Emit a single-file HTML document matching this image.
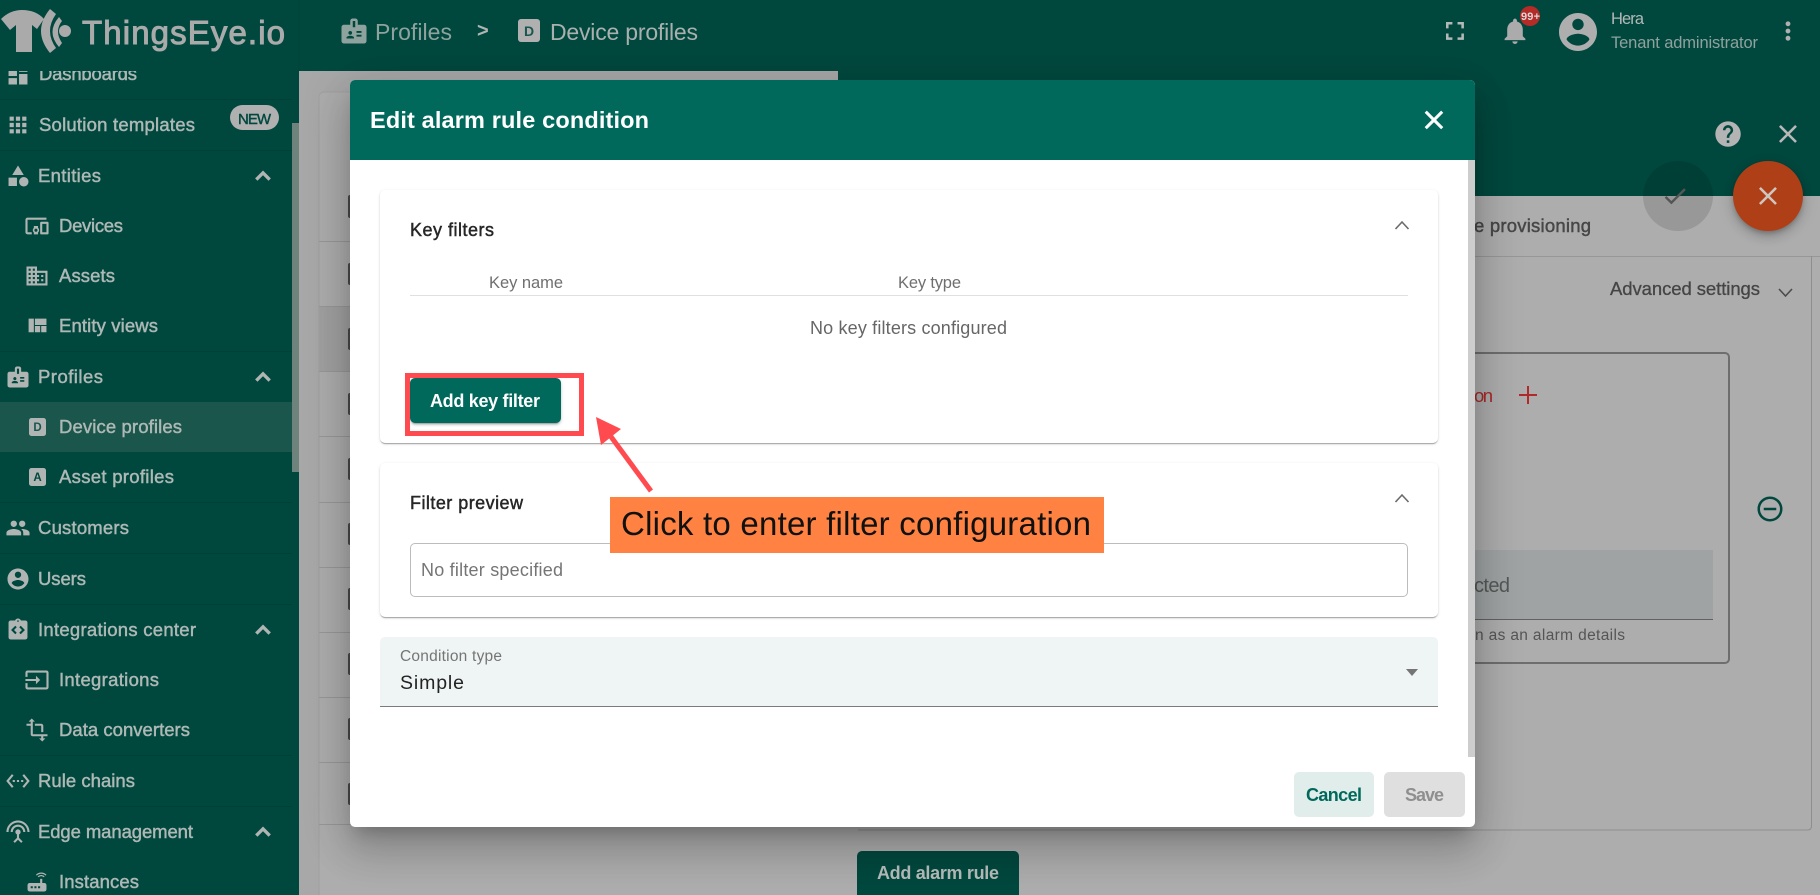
<!DOCTYPE html>
<html lang="en">
<head>
<meta charset="utf-8">
<title>Edit alarm rule condition</title>
<style>
html,body{margin:0;padding:0;width:1820px;height:895px;overflow:hidden;background:#a8a8a8;font-family:"Liberation Sans",sans-serif}
svg{position:absolute;left:0;top:0}
svg text{font-family:"Liberation Sans",sans-serif;white-space:pre}
.b{position:absolute;box-sizing:border-box}
#l1{z-index:1}
#l3{z-index:3}
.card{background:#fff;border-radius:5px;box-shadow:0 2px 1px -1px rgba(0,0,0,.2),0 1px 1px rgba(0,0,0,.14),0 1px 3px rgba(0,0,0,.12)}
</style>
</head>
<body>
<svg id="l1" width="1820" height="895" viewBox="0 0 1820 895">
<defs>
<path id="dash" d="M3 13h8V3H3v10zm0 8h8v-6H3v6zm10 0h8V11h-8v10zm0-18v6h8V3h-8z"/>
<path id="apps" d="M4 8h4V4H4v4zm6 12h4v-4h-4v4zm-6 0h4v-4H4v4zm0-6h4v-4H4v4zm6 0h4v-4h-4v4zm6-10v4h4V4h-4zm-6 4h4V4h-4v4zm6 6h4v-4h-4v4zm0 6h4v-4h-4v4z"/>
<path id="cat" d="M12 2l-5.500 9h11zM17.500 13a4.500 4.500 0 1 0 0 9a4.500 4.500 0 1 0 0-9zM3 13.500h8v8H3z"/>
<path id="dev" d="M3 6h18V4H3c-1.100 0-2 .9-2 2v12c0 1.100.9 2 2 2h4v-2H3V6zm10 6H9v1.780c-.61.55-1 1.330-1 2.220s.39 1.670 1 2.220V20h4v-1.780c.61-.55 1-1.340 1-2.220s-.39-1.670-1-2.220V12zm-2 5.500c-.83 0-1.500-.67-1.500-1.500s.67-1.500 1.500-1.500 1.500.67 1.500 1.500-.67 1.500-1.500 1.500zM22 8h-6c-.5 0-1 .5-1 1v10c0 .5.5 1 1 1h6c.5 0 1-.5 1-1V9c0-.5-.5-1-1-1zm-1 10h-4v-8h4v8z"/>
<path id="dom" d="M12 7V3H2v18h20V7H12zM6 19H4v-2h2v2zm0-4H4v-2h2v2zm0-4H4V9h2v2zm0-4H4V5h2v2zm4 12H8v-2h2v2zm0-4H8v-2h2v2zm0-4H8V9h2v2zm0-4H8V5h2v2zm10 12h-8v-2h2v-2h-2v-2h2v-2h-2V9h8v10zm-2-8h-2v2h2v-2zm0 4h-2v2h2v-2z"/>
<path id="quilt" d="M10 18h5v-6h-5v6zm-6 0h5V5H4v13zm12 0h5v-6h-5v6zM10 5v6h11V5H10z"/>
<path id="badge" d="M20 7h-5V4c0-1.100-.9-2-2-2h-2c-1.100 0-2 .9-2 2v3H4c-1.100 0-2 .9-2 2v11c0 1.100.9 2 2 2h16c1.100 0 2-.9 2-2V9c0-1.100-.9-2-2-2zM9 12c.83 0 1.500.67 1.500 1.500S9.830 15 9 15s-1.500-.67-1.500-1.500S8.170 12 9 12zm3 6H6v-.75c0-1 2-1.500 3-1.500s3 .5 3 1.500V18zm1-9h-2V4h2v5zm5 7.500h-4V15h4v1.500zm0-3h-4V12h4v1.500z"/>
<path id="people" d="M16 11c1.660 0 2.990-1.340 2.990-3S17.660 5 16 5c-1.660 0-3 1.340-3 3s1.340 3 3 3zm-8 0c1.660 0 2.990-1.340 2.990-3S9.660 5 8 5C6.340 5 5 6.340 5 8s1.340 3 3 3zm0 2c-2.330 0-7 1.170-7 3.500V19h14v-2.500c0-2.330-4.670-3.500-7-3.500zm8 0c-.29 0-.62.02-.97.05 1.160.84 1.970 1.970 1.970 3.450V19h6v-2.500c0-2.330-4.670-3.500-7-3.500z"/>
<path id="acc" d="M12 2C6.480 2 2 6.480 2 12s4.480 10 10 10 10-4.480 10-10S17.520 2 12 2zm0 3c1.660 0 3 1.340 3 3s-1.340 3-3 3-3-1.340-3-3 1.340-3 3-3zm0 14.200c-2.500 0-4.710-1.280-6-3.220.03-1.990 4-3.080 6-3.080 1.990 0 5.970 1.090 6 3.080-1.290 1.940-3.500 3.220-6 3.220z"/>
<path id="integ" d="M19 3h-4.180C14.400 1.840 13.300 1 12 1c-1.300 0-2.400.84-2.820 2H5c-1.100 0-2 .9-2 2v14c0 1.100.9 2 2 2h14c1.100 0 2-.9 2-2V5c0-1.100-.9-2-2-2zm-7-.25c.41 0 .75.34.75.75s-.34.75-.75.75-.75-.34-.75-.75.34-.75.75-.75zM10.800 14.600L9.400 16l-4-4 4-4 1.400 1.400L8.200 12l2.600 2.600zm2.400 0l2.600-2.600-2.600-2.600L14.600 8l4 4-4 4-1.400-1.400z"/>
<path id="input" d="M21 3.010H3c-1.100 0-2 .9-2 2V9h2V4.990h18v14.030H3V15H1v4.010c0 1.100.9 1.980 2 1.980h18c1.100 0 2-.88 2-1.980v-14c0-1.110-.9-2-2-2zM11 16l4-4-4-4v3H1v2h10v3z"/>
<path id="trans" d="M22 18v-2H8V4h2L7 1 4 4h2v2H2v2h4v8c0 1.100.9 2 2 2h8v2h-2l3 3 3-3h-2v-2h4zM10 8h6v6h2V8c0-1.100-.9-2-2-2h-6v2z"/>
<path id="eth" d="M7.770 6.760L6.230 5.480.82 12l5.410 6.520 1.540-1.280L3.420 12l4.350-5.240zM7 13h2v-2H7v2zm10-2h-2v2h2v-2zm-6 2h2v-2h-2v2zm6.770-7.520l-1.540 1.280L20.580 12l-4.350 5.240 1.540 1.280L23.180 12l-5.410-6.520z"/>
<path id="ant" d="M12 5c-3.870 0-7 3.130-7 7h2c0-2.760 2.240-5 5-5s5 2.240 5 5h2c0-3.870-3.130-7-7-7zm1 9.290c.88-.39 1.500-1.260 1.500-2.290 0-1.380-1.120-2.500-2.500-2.500S9.500 10.620 9.500 12c0 1.020.62 1.900 1.500 2.290v3.300L7.590 21 9 22.410l3-3 3 3L16.410 21 13 17.590v-3.300zM12 1C5.930 1 1 5.930 1 12h2c0-4.970 4.030-9 9-9s9 4.030 9 9h2c0-6.070-4.930-11-11-11z"/>
<path id="router" d="M20.200 5.900l.8-.8C19.600 3.700 17.800 3 16 3s-3.600.7-5 2.100l.8.8C13 4.800 14.500 4.200 16 4.200s3 .6 4.200 1.700zm-.9.8c-.9-.9-2.100-1.400-3.300-1.400s-2.400.5-3.300 1.400l.8.8c.7-.7 1.600-1 2.500-1 .9 0 1.800.3 2.500 1l.8-.8zM19 13h-2V9h-2v4H5c-1.100 0-2 .9-2 2v4c0 1.100.9 2 2 2h14c1.100 0 2-.9 2-2v-4c0-1.100-.9-2-2-2zM8 18H6v-2h2v2zm3.500 0h-2v-2h2v2zm3.500 0h-2v-2h2v2z"/>
<path id="full" d="M7 14H5v5h5v-2H7v-3zm-2-4h2V7h3V5H5v5zm12 7h-3v2h5v-5h-2v3zM14 5v2h3v3h2V5h-5z"/>
<path id="bell" d="M12 22c1.100 0 2-.9 2-2h-4c0 1.100.89 2 2 2zm6-6v-5c0-3.070-1.640-5.640-4.500-6.320V4c0-.83-.67-1.500-1.500-1.500s-1.500.67-1.500 1.500v.68C7.630 5.360 6 7.920 6 11v5l-2 2v1h16v-1l-2-2z"/>
<path id="more" d="M12 8c1.100 0 2-.9 2-2s-.9-2-2-2-2 .9-2 2 .9 2 2 2zm0 2c-1.100 0-2 .9-2 2s.9 2 2 2 2-.9 2-2-.9-2-2-2zm0 6c-1.100 0-2 .9-2 2s.9 2 2 2 2-.9 2-2-.9-2-2-2z"/>
<path id="help" d="M12 2C6.480 2 2 6.480 2 12s4.480 10 10 10 10-4.480 10-10S17.520 2 12 2zm1 17h-2v-2h2v2zm2.070-7.750l-.9.92C13.450 12.900 13 13.500 13 15h-2v-.5c0-1.100.45-2.100 1.170-2.830l1.240-1.260c.37-.36.59-.86.59-1.410 0-1.100-.9-2-2-2s-2 .9-2 2H8c0-2.210 1.790-4 4-4s4 1.790 4 4c0 .88-.36 1.680-.93 2.250z"/>
<path id="close" d="M19 6.410L17.590 5 12 10.590 6.410 5 5 6.410 10.590 12 5 17.590 6.410 19 12 13.410 17.590 19 19 17.590 13.410 12z"/>
<path id="up" d="M12 8l-6 6 1.410 1.410L12 10.830l4.590 4.580L18 14z"/>
<path id="check" d="M9 16.170L4.830 12l-1.420 1.410L9 19 21 7l-1.410-1.410z"/>
<path id="minus" d="M7 11v2h10v-2H7zm5-9C6.480 2 2 6.480 2 12s4.480 10 10 10 10-4.480 10-10S17.520 2 12 2zm0 18c-4.410 0-8-3.590-8-8s3.590-8 8-8 8 3.590 8 8-3.590 8-8 8z"/>
<clipPath id="navclip"><rect x="0" y="71" width="292" height="824"/></clipPath>
</defs>

<!-- page background -->
<rect x="0" y="0" width="1820" height="895" fill="#a8a8a8"/>
<!-- left list panel -->
<rect x="319" y="92" width="540" height="820" rx="5" fill="#adadad" stroke="#a0a0a0"/>
<rect x="319" y="306" width="519" height="65" fill="#a1a1a1"/>
<g stroke="#989898" stroke-width="1">
<path d="M319 241.500H838M319 306.500H838M319 371.500H838M319 436.500H838M319 502.500H838M319 567.500H838M319 632.500H838M319 697.500H838M319 762.500H838M319 824.500H838"/>
</g>
<g fill="#4a4a4a">
<rect x="348" y="195" width="6" height="23" rx="2"/><rect x="348" y="263" width="6" height="22" rx="2"/><rect x="348" y="328" width="6" height="22" rx="2"/><rect x="348" y="393" width="6" height="22" rx="2"/><rect x="348" y="458" width="6" height="22" rx="2"/><rect x="348" y="523" width="6" height="22" rx="2"/><rect x="348" y="588" width="6" height="22" rx="2"/><rect x="348" y="653" width="6" height="22" rx="2"/><rect x="348" y="718" width="6" height="22" rx="2"/><rect x="348" y="783" width="6" height="22" rx="2"/>
</g>

<!-- right drawer -->
<rect x="838" y="71" width="982" height="824" fill="#adadad"/>
<rect x="838" y="71" width="982" height="125" fill="#00483e"/>
<path d="M838 256.500H1820" stroke="#979797"/>
<path d="M1811.500 256V826q0 4-4 4H858" stroke="#8e8e8e" fill="none"/>
<rect x="1000" y="353" width="729" height="310" rx="4" fill="none" stroke="#6e6e6e" stroke-width="2"/>
<rect x="1100" y="550" width="613" height="69" fill="#9fa3a3"/>
<path d="M1100 619.500H1713" stroke="#5f6362"/>
<rect x="857" y="851" width="162" height="50" rx="5" fill="#00483e"/>
<text x="877" y="879" font-size="18" font-weight="700" fill="#b5bcb9" textLength="122">Add alarm rule</text>
<text x="1474" y="232" font-size="18.500" fill="#474747" stroke="#474747" stroke-width=".45" textLength="117">e provisioning</text>
<text x="1610" y="295" font-size="18.500" fill="#454545" stroke="#454545" stroke-width=".3" textLength="150">Advanced settings</text>
<path d="M1779 289l6.500 7 6.500-7" fill="none" stroke="#4b4b4b" stroke-width="1.600"/>
<text x="1474" y="402" font-size="18.500" fill="#a82828" textLength="19">on</text>
<path d="M1528 386v18M1519 395h18" stroke="#b02a2a" stroke-width="2"/>
<text x="1474" y="592" font-size="20" fill="#565858" textLength="36">cted</text>
<text x="1475" y="640" font-size="15.500" fill="#555" textLength="150">n as an alarm details</text>
<use href="#minus" transform="translate(1755 494) scale(1.250)" fill="#00483e"/>

<!-- sidebar -->
<rect x="0" y="71" width="299" height="824" fill="#00483e"/>
<rect x="292" y="123" width="7" height="349" fill="#6f837d"/>
<rect x="0" y="402" width="292" height="50" fill="#1a564c"/>
<path d="M0 99.500H292M0 150.500H292M0 351.500H292M0 502.500H292M0 553.500H292M0 604.500H292M0 755.500H292M0 806.500H292" stroke="#004037" stroke-width="1"/>

<g clip-path="url(#navclip)" fill="#b0b5b3">
<use href="#dash" transform="translate(5.400 62.400) scale(1.050)"/>
<use href="#apps" transform="translate(5.400 112.400) scale(1.050)"/>
<use href="#cat" transform="translate(5.400 163.400) scale(1.050)"/>
<use href="#dev" transform="translate(24.400 213.400) scale(1.050)"/>
<use href="#dom" transform="translate(24.400 263.400) scale(1.050)"/>
<use href="#quilt" transform="translate(24.400 313.400) scale(1.050)"/>
<use href="#badge" transform="translate(5.400 364.400) scale(1.050)"/>
<use href="#people" transform="translate(5.400 515.400) scale(1.050)"/>
<use href="#acc" transform="translate(5.400 566.400) scale(1.050)"/>
<use href="#integ" transform="translate(5.400 617.400) scale(1.050)"/>
<use href="#input" transform="translate(24.400 667.400) scale(1.050)"/>
<use href="#trans" transform="translate(24.400 717.400) scale(1.050)"/>
<use href="#eth" transform="translate(5.400 768.400) scale(1.050)"/>
<use href="#ant" transform="translate(5.400 819.400) scale(1.050)"/>
<use href="#router" transform="translate(24.400 869.400) scale(1.050)"/>
<rect x="29" y="418" width="17" height="18" rx="2.500"/>
<rect x="29" y="468" width="17" height="18" rx="2.500"/>
<g stroke="#b0b5b3" stroke-width=".8">
<use href="#up" transform="translate(248.600 161.600) scale(1.200)"/>
<use href="#up" transform="translate(248.600 362.600) scale(1.200)"/>
<use href="#up" transform="translate(248.600 615.600) scale(1.200)"/>
<use href="#up" transform="translate(248.600 817.600) scale(1.200)"/>
</g>
</g>
<g clip-path="url(#navclip)" font-size="18.500" fill="#aeb8b5" stroke="#aeb8b5" stroke-width=".45">
<text x="39" y="80" textLength="98">Dashboards</text>
<text x="39" y="131" textLength="156">Solution templates</text>
<text x="38" y="182" textLength="63">Entities</text>
<text x="59" y="232" textLength="64">Devices</text>
<text x="59" y="282" textLength="56">Assets</text>
<text x="59" y="332" textLength="99">Entity views</text>
<text x="38" y="383" textLength="65">Profiles</text>
<text x="59" y="433" textLength="123">Device profiles</text>
<text x="59" y="483" textLength="115">Asset profiles</text>
<text x="38" y="534" textLength="91">Customers</text>
<text x="38" y="585" textLength="48">Users</text>
<text x="38" y="636" textLength="158">Integrations center</text>
<text x="59" y="686" textLength="100">Integrations</text>
<text x="59" y="736" textLength="131">Data converters</text>
<text x="38" y="787" textLength="97">Rule chains</text>
<text x="38" y="838" textLength="155">Edge management</text>
<text x="59" y="888" textLength="80">Instances</text>
</g>
<g font-size="11.500" font-weight="700" fill="#1a564c" text-anchor="middle">
<text x="37.500" y="431">D</text>
</g>
<g font-size="11.500" font-weight="700" fill="#00483e" text-anchor="middle">
<text x="37.500" y="481">A</text>
</g>
<rect x="230" y="105" width="49" height="25" rx="12.500" fill="#b0b0b0"/>
<text x="238" y="124" font-size="15" fill="#00483e" stroke="#00483e" stroke-width=".4" textLength="33">NEW</text>

<!-- top toolbar -->
<rect x="0" y="0" width="1820" height="71" fill="#00483e"/>
<path d="M299 0V71" stroke="#004237"/>
<g fill="#aaaaaa">
<path d="M1 19Q10 10 22 10Q36 10 44 19L37 29L32 25V52H16V25L10 30Z"/>
<path d="M50 9L56 14Q44 31 56 48L50 53Q32 31 50 9Z"/>
<path d="M59 17L62 21Q54 31 62 43L59 47Q46 32 59 17Z"/>
<circle cx="65" cy="31" r="6"/>
<text x="82" y="44" font-size="33" textLength="203" stroke="#aaaaaa" stroke-width="1">ThingsEye.io</text>
</g>
<use href="#badge" transform="translate(339 16) scale(1.250)" fill="#8fa39e"/>
<text x="375" y="40" font-size="23" fill="#8fa39e" textLength="77">Profiles</text>
<text x="477" y="37" font-size="20" font-weight="700" fill="#b0b5b3" textLength="13">&gt;</text>
<rect x="518" y="19" width="22" height="23" rx="3" fill="#b0b0b0"/>
<text x="529" y="36" font-size="14" font-weight="700" fill="#1a564c" text-anchor="middle">D</text>
<text x="550" y="40" font-size="23" fill="#aab0ae" textLength="148">Device profiles</text>

<use href="#full" transform="translate(1439.600 15.600) scale(1.280)" fill="#b4b8b6"/>
<use href="#bell" transform="translate(1499.400 15.400) scale(1.300)" fill="#ababab"/>
<circle cx="1530" cy="16" r="10" fill="#b52b27"/>
<text x="1521" y="20" font-size="11" font-weight="700" fill="#d8d8d8" textLength="19">99+</text>
<use href="#acc" transform="translate(1555.200 9.200) scale(1.900)" fill="#aeaeae"/>
<text x="1611" y="24" font-size="16.500" fill="#b3b9b7" textLength="33">Hera</text>
<text x="1611" y="48" font-size="16.500" fill="#8fa19d" textLength="147">Tenant administrator</text>
<use href="#more" transform="translate(1773.600 16.600) scale(1.200)" fill="#b0b0b0"/>
<use href="#help" transform="translate(1712.800 118.800) scale(1.270)" fill="#b4b4b4"/>
<use href="#close" transform="translate(1772.600 118.600) scale(1.280)" fill="#b8b8b8"/>
</svg>

<!-- FABs -->
<div class="b" style="z-index:1;left:1643px;top:161px;width:70px;height:70px;border-radius:50%;background:rgba(0,0,0,.12)"></div>
<div class="b" style="z-index:1;left:1733px;top:161px;width:70px;height:70px;border-radius:50%;background:#ae3f17;box-shadow:0 3px 5px -1px rgba(0,0,0,.2),0 6px 10px rgba(0,0,0,.14),0 1px 18px rgba(0,0,0,.12)"></div>

<!-- modal -->
<div class="b" style="z-index:2;left:350px;top:80px;width:1125px;height:747px;background:#fff;border-radius:5px;box-shadow:0 11px 15px -7px rgba(0,0,0,.2),0 24px 38px 3px rgba(0,0,0,.14),0 9px 46px 8px rgba(0,0,0,.12)">
  <div class="b" style="left:0;top:0;width:1125px;height:80px;background:#00695c;border-radius:5px 5px 0 0"></div>
  <div class="b" style="left:1118px;top:80px;width:7px;height:597px;background:#cdcdcd"></div>
  <div class="b card" style="left:30px;top:110px;width:1058px;height:253px"></div>
  <div class="b card" style="left:30px;top:383px;width:1058px;height:154px"></div>
  <div class="b" style="left:30px;top:557px;width:1058px;height:70px;background:#eff5f4;border-radius:5px 5px 0 0;border-bottom:1.500px solid #7b7b7b"></div>
  <div class="b" style="left:60px;top:215px;width:998px;height:1px;background:#e0e0e0"></div>
  <div class="b" style="left:60px;top:298px;width:151px;height:45px;background:#00695c;border-radius:5px;box-shadow:0 3px 1px -2px rgba(0,0,0,.2),0 2px 2px rgba(0,0,0,.14),0 1px 5px rgba(0,0,0,.12)"></div>
  <div class="b" style="left:60px;top:463px;width:998px;height:54px;border:1.500px solid #bcbcbc;border-radius:5px"></div>
  <div class="b" style="left:944px;top:692px;width:80px;height:45px;background:#e1edea;border-radius:5px"></div>
  <div class="b" style="left:1034px;top:692px;width:81px;height:45px;background:#dfdfdf;border-radius:5px"></div>
</div>

<svg id="l3" width="1820" height="895" viewBox="0 0 1820 895">
<use href="#check" transform="translate(1660.600 181.600) scale(1.200)" fill="#555"/>
<use href="#close" transform="translate(1752.600 180.600) scale(1.280)" fill="#cfc6c0"/>

<text x="370" y="128" font-size="23.500" font-weight="700" fill="#fff" textLength="279">Edit alarm rule condition</text>
<use href="#close" transform="translate(1418.600 104.600) scale(1.280)" fill="#fff" stroke="#fff" stroke-width=".4"/>

<g fill="#262626" stroke="#262626" stroke-width=".45" font-size="18">
<text x="410" y="236" textLength="84">Key filters</text>
<text x="410" y="509" textLength="113">Filter preview</text>
</g>
<path d="M1395.500 229l6.500-7 6.500 7" fill="none" stroke="#6b6b6b" stroke-width="1.600"/>
<path d="M1395.500 502l6.500-7 6.500 7" fill="none" stroke="#6b6b6b" stroke-width="1.600"/>
<text x="489" y="288" font-size="16.500" fill="#6f6f6f" textLength="74">Key name</text>
<text x="898" y="288" font-size="16.500" fill="#6f6f6f" textLength="63">Key type</text>
<text x="810" y="334" font-size="18" fill="#666" textLength="197">No key filters configured</text>
<text x="430" y="407" font-size="18" font-weight="700" fill="#fff" textLength="110">Add key filter</text>
<text x="421" y="576" font-size="18" fill="#757575" textLength="142">No filter specified</text>
<text x="400" y="661" font-size="15.500" fill="#757575" textLength="102">Condition type</text>
<text x="400" y="689" font-size="19.500" fill="#232323" textLength="64">Simple</text>
<polygon points="1406,669 1418,669 1412,676" fill="#757575"/>
<text x="1306" y="801" font-size="18" font-weight="700" fill="#00695c" textLength="56">Cancel</text>
<text x="1405" y="801" font-size="18" font-weight="700" fill="#8f8f8f" textLength="39">Save</text>

<!-- annotation -->
<rect x="407.500" y="375.500" width="174" height="58" fill="none" stroke="#ff4b4f" stroke-width="5"/>
<path d="M651 491L609 434" stroke="#ff4b4f" stroke-width="5" fill="none"/>
<polygon points="596,417 621,429 601,445" fill="#ff4b4f"/>
<rect x="610" y="497" width="494" height="56" fill="#ff8243"/>
<text x="621" y="535" font-size="33" fill="#111" textLength="470">Click to enter filter configuration</text>
</svg>
</body>
</html>
